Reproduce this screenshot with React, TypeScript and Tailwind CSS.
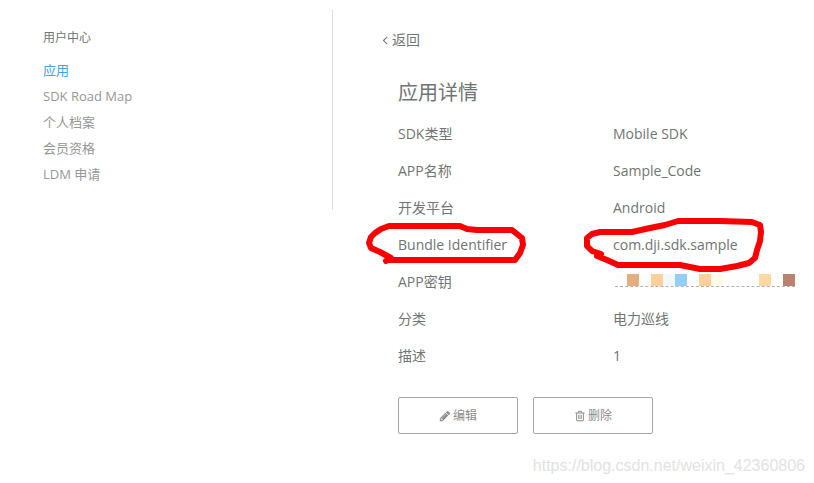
const menu = [
  { name: "应用", link: "#apps", active: true },
  { name: "SDK Road Map", link: "#roadmap" },
  { name: "个人档案", link: "#profile" },
  { name: "会员资格", link: "#membership" },
  { name: "LDM 申请", link: "#ldm" },
]

const maskCells = [
  "bg-[#fdfdfd]",
  "bg-[#e2b080]",
  "bg-[#fdfdfd]",
  "bg-[#fcd09a]",
  "bg-[#f1f9fd]",
  "bg-[#94cef6]",
  "bg-[#fdfdfd]",
  "bg-[#fcd09a]",
  "bg-[#fffbe8]",
  "bg-[#fefefe]",
  "bg-[#fefefe]",
  "bg-[#fefefe]",
  "bg-[#fcd8a2]",
  "bg-[#fefefe]",
  "bg-[#ba8270]",
]

function AngleLeft() {
  return (
    <svg className="size-3.5 -mr-1 -ml-1" viewBox="0 0 1792 1792" fill="currentColor" aria-hidden="true">
      <path d="M1203 544q0 13-10 23l-393 393 393 393q10 10 10 23t-10 23l-50 50q-10 10-23 10t-23-10l-466-466q-10-10-10-23t10-23l466-466q10-10 23-10t23 10l50 50q10 10 10 23z" />
    </svg>
  )
}

function Pencil() {
  return (
    <svg className="size-3" viewBox="0 0 1792 1792" fill="currentColor" aria-hidden="true">
      <path d="M491 1536l91-91-235-235-91 91v107h128v128h107zm523-928q0-22-22-22-10 0-17 7l-542 542q-7 7-7 17 0 22 22 22 10 0 17-7l542-542q7-7 7-17zm-54-192l416 416-832 832h-416v-416zm683 96q0 53-37 90l-166 166-416-416 166-165q36-38 90-38 53 0 91 38l235 234q37 39 37 91z" />
    </svg>
  )
}

function Trash() {
  return (
    <svg className="size-3" viewBox="0 0 1792 1792" fill="currentColor" aria-hidden="true">
      <path d="M704 736v576q0 14-9 23t-23 9h-64q-14 0-23-9t-9-23v-576q0-14 9-23t23-9h64q14 0 23 9t9 23zm256 0v576q0 14-9 23t-23 9h-64q-14 0-23-9t-9-23v-576q0-14 9-23t23-9h64q14 0 23 9t9 23zm256 0v576q0 14-9 23t-23 9h-64q-14 0-23-9t-9-23v-576q0-14 9-23t23-9h64q14 0 23 9t9 23zm128 724v-948h-896v948q0 22 7 40.5t14.5 27 10.5 8.5h832q3 0 10.5-8.5t14.5-27 7-40.5zm-672-1076h448l-48-117q-7-9-17-11h-317q-10 2-17 11zm928 32v64q0 14-9 23t-23 9h-96v948q0 83-47 143.5t-113 60.5h-832q-66 0-113-58.5t-47-141.5v-952h-96q-14 0-23-9t-9-23v-64q0-14 9-23t23-9h309l70-167q15-37 54-63t79-26h320q40 0 79 26t54 63l70 167h309q14 0 23 9t9 23z" />
    </svg>
  )
}

// hand drawn marker round the label
function LabelMark() {
  return (
    <svg
      className="absolute -left-9 -top-2 h-13 w-42"
      viewBox="362 218 168 52"
      fill="none"
      stroke="#fb0000"
      strokeWidth="6"
      strokeLinecap="round"
      strokeLinejoin="round"
      aria-hidden="true"
    >
      <path d="M386 261L391 258L380 252L371 248L369 243L371 237L375 233L381 229L389 226H460L467 229L477 230H512L517 234L522 238L523 245L520 253L515 260H387" />
    </svg>
  )
}

// same marker round the value
function ValueMark() {
  return (
    <svg
      className="absolute -left-8 -top-3 h-15 w-46"
      viewBox="581 214 184 60"
      fill="none"
      stroke="#fb0000"
      strokeWidth="6"
      strokeLinecap="round"
      strokeLinejoin="round"
      aria-hidden="true"
    >
      <path d="M601 254L592 251L587 246L587 238L592 234L600 232H632L650 228L665 225L678 221H720L752 222L760 225L761 232L760 241L757 250L755 258L749 263L737 266L720 269H700L680 265H618L607 260L597 256" />
    </svg>
  )
}

function MaskedKey() {
  return (
    <div className="mb-0.5 ml-0.5 flex w-fit border-b border-dashed border-[#b5b0ac]" role="img" aria-label="APP密钥">
      {maskCells.map((color, index) => (
        <span key={index} className={`h-3 w-3 ${color}`} />
      ))}
    </div>
  )
}

export default function App() {
  const details = [
    { label: "SDK类型", value: "Mobile SDK" },
    { label: "APP名称", value: "Sample_Code" },
    { label: "开发平台", value: "Android" },
    { label: "Bundle Identifier", value: "com.dji.sdk.sample", marked: true },
    { label: "APP密钥", value: <MaskedKey /> },
    { label: "分类", value: "电力巡线" },
    { label: "描述", value: "1" },
  ]

  return (
    <div className="bg-white pt-2.5 font-['Open_Sans','Noto_Sans_CJK_SC',sans-serif] text-[#707473]">
      <div className="flex items-start">
        <aside className="h-50 w-[333px] shrink-0 border-r border-[#dddddd] pt-4 pl-[43px]">
          <h2 className="text-xs leading-6">用户中心</h2>
          <nav className="mt-[7px]">
            <ul>
              {menu.map((item) => (
                <li key={item.name} className="text-[13px] leading-[26px]">
                  <a href={item.link} className={item.active ? "text-[#44a0e2]" : "text-[#979797]"}>
                    {item.name}
                  </a>
                </li>
              ))}
            </ul>
          </nav>
        </aside>

        <main className="min-w-0 flex-1 pt-5 pl-[49px]">
          <a href="#back" className="flex w-fit items-center gap-1 text-sm leading-5">
            <AngleLeft />
            返回
          </a>
          <div className="mt-[25px] pl-4">
            <h1 className="text-xl leading-9">应用详情</h1>
            <dl className="mt-1">
              {details.map((item) => (
                <div key={item.label} className="flex h-[37px] items-center text-sm">
                  <dt className="relative flex h-[37px] w-[215px] shrink-0 items-center">
                    {item.label}
                    {item.marked && <LabelMark />}
                  </dt>
                  <dd className="relative flex h-[37px] items-center whitespace-nowrap">
                    {item.value}
                    {item.marked && <ValueMark />}
                  </dd>
                </div>
              ))}
            </dl>
            <div className="mt-[23px] flex gap-[15px] text-xs text-[#8c8c8c]">
              <button
                type="button"
                className="flex h-[37px] w-30 items-center justify-center gap-0.5 rounded-xs border border-[#a6a6a6]"
              >
                <Pencil />
                编辑
              </button>
              <button
                type="button"
                className="flex h-[37px] w-30 items-center justify-center gap-0.5 rounded-xs border border-[#a6a6a6]"
              >
                <Trash />
                删除
              </button>
            </div>
          </div>
        </main>
      </div>
      <footer className="mt-5 pr-[9px] text-right font-['Liberation_Sans',sans-serif] text-base leading-6 text-[#e2e2e2]">
        https://blog.csdn.net/weixin_42360806
      </footer>
    </div>
  )
}
